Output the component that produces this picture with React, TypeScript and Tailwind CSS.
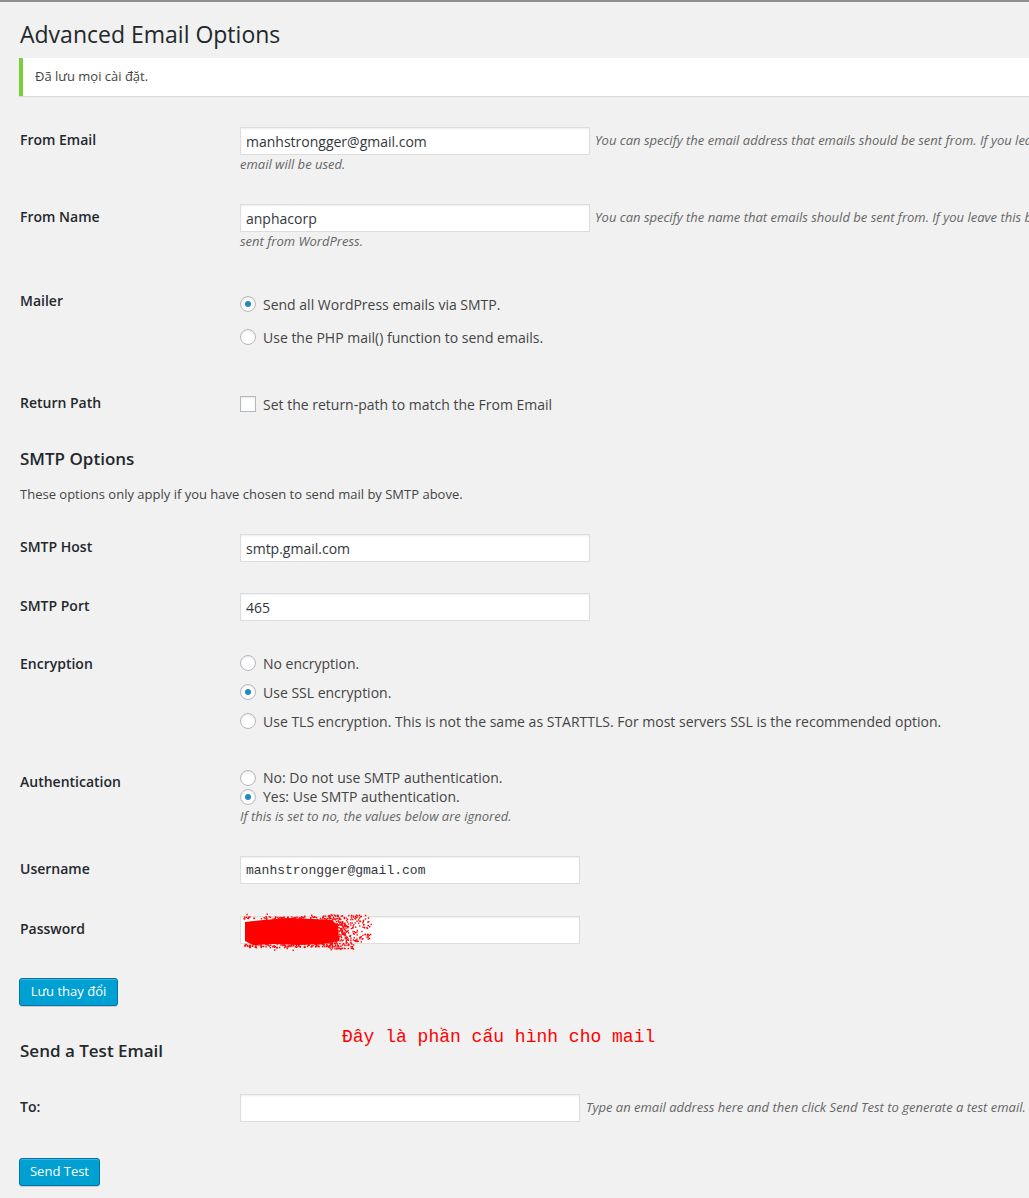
import React from 'react';

const font = { fontFamily: '"Open Sans", "Noto Sans", sans-serif' };

const Label: React.FC<{ children: React.ReactNode; pt?: string }> = ({ children, pt = 'pt-[3px]' }) => (
  <div className={`w-[240px] shrink-0 pl-5 text-[14px] leading-[20px] font-semibold text-[#23282d] ${pt}`}>{children}</div>
);

const TextInput: React.FC<{ value?: string; w?: string; mono?: boolean }> = ({ value = '', w = 'w-[350px]', mono }) => (
  <input
    readOnly
    defaultValue={value}
    className={`${w} h-[28px] shrink-0 border border-[#dddddd] bg-white px-[5px] text-[14px] text-[#32373c] shadow-[inset_0_1px_2px_rgba(0,0,0,0.07)] outline-none`}
    style={mono ? { fontFamily: '"Liberation Mono", "DejaVu Sans Mono", monospace', fontSize: 13 } : undefined}
  />
);

const Radio: React.FC<{ checked?: boolean; label: string; h?: string }> = ({ checked, label, h = 'h-[24px]' }) => (
  <div className={`flex items-center ${h}`}>
    <span className="mr-[7px] flex h-4 w-4 shrink-0 items-center justify-center rounded-full border border-[#b4b9be] bg-white shadow-[inset_0_1px_2px_rgba(0,0,0,0.1)]">
      {checked && <span className="h-[6px] w-[6px] rounded-full bg-[#1e8cbe]" />}
    </span>
    <span className="text-[14px] text-[#444444]">{label}</span>
  </div>
);

const Desc: React.FC<{ children: React.ReactNode; className?: string }> = ({ children, className = '' }) => (
  <span className={`text-[13px] italic text-[#666666] whitespace-nowrap ${className}`}>{children}</span>
);

const Button: React.FC<{ children: React.ReactNode; w: string }> = ({ children, w }) => (
  <button className={`${w} -ml-px h-[28px] rounded-[3px] border border-[#0073aa] bg-[#00a0d2] text-[13px] text-white shadow-[inset_0_1px_0_rgba(120,200,230,0.5),0_1px_0_rgba(0,0,0,0.15)]`}>
    {children}
  </button>
);

// the red blot drawn over the password
const Scribble: React.FC = () => {
  let seed = 12345;
  const rnd = () => {
    seed = (seed * 16807) % 2147483647;
    return seed / 2147483647;
  };
  const dots: JSX.Element[] = [];
  for (let i = 0; i < 2600; i++) {
    const x = rnd() * 128;
    const y = rnd() * 37;
    let p = 0;
    if (x < 85) {
      const inCore = y > 6 && y < 30;
      p = inCore ? 0 : y > 3 && y < 34 ? 0.6 : 0.05;
    } else {
      const fall = Math.max(0, 1 - (x - 85) / 43);
      const lowerCut = x < 110 ? 36 : 30;
      p = y > 1 && y < lowerCut ? 0.75 * fall + 0.1 : 0;
    }
    if (rnd() < p) dots.push(<rect key={i} x={x} y={y} width={1.4} height={1.4} fill="#ff0000" />);
  }
  return (
    <svg width="130" height="38" className="pointer-events-none absolute left-[3px] top-[-3px]">
      <path d="M2 9 L20 7 L45 5 L70 6 L88 7 L95 12 L96 28 L80 31 L55 32 L30 31 L10 32 L2 28 Z" fill="#ff0000" />
      {dots}
    </svg>
  );
};

const App: React.FC = () => {
  return (
    <div className="w-[1029px] min-h-[1198px] overflow-hidden bg-[#f1f1f1] text-[#444444]" style={font}>
      <div className="h-[2px] bg-[#8f8f8f]" />

      {/* Title */}
      <h1 className="mt-[17px] pl-5 text-[23px] leading-[30px] font-normal text-[#23282d]">Advanced Email Options</h1>

      {/* Notice */}
      <div className="ml-[19px] mt-[9px] flex h-[38px] items-center border-l-4 border-[#7ad03a] bg-white pl-3 shadow-[0_1px_1px_rgba(0,0,0,0.1)]">
        <p className="text-[13px] text-[#444444]">Đã lưu mọi cài đặt.</p>
      </div>

      {/* From Email */}
      <div className="mt-[31px] flex">
        <Label>From Email</Label>
        <div>
          <div className="flex h-[28px] items-center">
            <TextInput value="manhstrongger@gmail.com" />
            <Desc className="ml-[5px]">You can specify the email address that emails should be sent from. If you leave this blank, the default</Desc>
          </div>
          <div className="leading-[16px]"><Desc>email will be used.</Desc></div>
        </div>
      </div>

      {/* From Name */}
      <div className="mt-[32px] flex">
        <Label>From Name</Label>
        <div>
          <div className="flex h-[28px] items-center">
            <TextInput value="anphacorp" />
            <Desc className="ml-[5px]">You can specify the name that emails should be sent from. If you leave this blank, the emails will be</Desc>
          </div>
          <div className="leading-[16px]"><Desc>sent from WordPress.</Desc></div>
        </div>
      </div>

      {/* Mailer */}
      <div className="mt-[41px] flex">
        <Label pt="pt-[1px]">Mailer</Label>
        <div className="flex flex-col gap-[9px] pt-[2px]">
          <Radio checked label="Send all WordPress emails via SMTP." />
          <Radio label="Use the PHP mail() function to send emails." />
        </div>
      </div>

      {/* Return Path */}
      <div className="mt-[43px] flex">
        <Label pt="pt-[1px]">Return Path</Label>
        <div className="flex h-[24px] items-center">
          <span className="mr-[7px] h-4 w-4 border border-[#b4b9be] bg-white shadow-[inset_0_1px_2px_rgba(0,0,0,0.1)]" />
          <span className="text-[14px] text-[#444444]">Set the return-path to match the From Email</span>
        </div>
      </div>

      {/* SMTP Options */}
      <h2 className="mt-[32px] pl-5 text-[17px] leading-[22px] font-semibold text-[#23282d]">SMTP Options</h2>
      <p className="mt-[14px] pl-5 text-[13px] leading-[20px] text-[#444444]">These options only apply if you have chosen to send mail by SMTP above.</p>

      <div className="mt-[30px] flex">
        <Label>SMTP Host</Label>
        <TextInput value="smtp.gmail.com" />
      </div>

      <div className="mt-[31px] flex">
        <Label>SMTP Port</Label>
        <TextInput value="465" />
      </div>

      <div className="mt-[30px] flex">
        <Label>Encryption</Label>
        <div className="flex flex-col gap-[5px]">
          <Radio label="No encryption." />
          <Radio checked label="Use SSL encryption." />
          <Radio label="Use TLS encryption. This is not the same as STARTTLS. For most servers SSL is the recommended option." />
        </div>
      </div>

      <div className="mt-[35px] flex">
        <Label pt="pt-[4px]">Authentication</Label>
        <div className="flex flex-col">
          <Radio h="h-[19px]" label="No: Do not use SMTP authentication." />
          <Radio h="h-[19px]" checked label="Yes: Use SMTP authentication." />
          <div className="leading-[18px]"><Desc className="text-[12px]">If this is set to no, the values below are ignored.</Desc></div>
        </div>
      </div>

      <div className="mt-[31px] flex">
        <Label>Username</Label>
        <TextInput value="manhstrongger@gmail.com" w="w-[340px]" mono />
      </div>

      <div className="mt-[32px] flex">
        <Label>Password</Label>
        <div className="relative">
          <TextInput w="w-[340px]" />
          <Scribble />
        </div>
      </div>

      <div className="mt-[34px] pl-5">
        <Button w="w-[99px]">Lưu thay đổi</Button>
      </div>

      {/* Send a Test Email */}
      <div className="relative mt-[34px]">
        <h2 className="pl-5 text-[17px] leading-[22px] font-semibold text-[#23282d]">Send a Test Email</h2>
        <span
          className="absolute left-[342px] top-[-15px] text-[18px] leading-[24px] text-[#ff0000] whitespace-nowrap"
          style={{ fontFamily: '"Liberation Mono", "DejaVu Sans Mono", monospace' }}
        >
          Đây là phần cấu hình cho mail
        </span>
      </div>

      <div className="mt-[32px] flex">
        <Label>To:</Label>
        <div className="flex h-[28px] items-center">
          <TextInput w="w-[340px]" />
          <Desc className="ml-[6px]">Type an email address here and then click Send Test to generate a test email.</Desc>
        </div>
      </div>

      <div className="mt-[36px] pl-5">
        <Button w="w-[81px]">Send Test</Button>
      </div>
    </div>
  );
};

export default App;
